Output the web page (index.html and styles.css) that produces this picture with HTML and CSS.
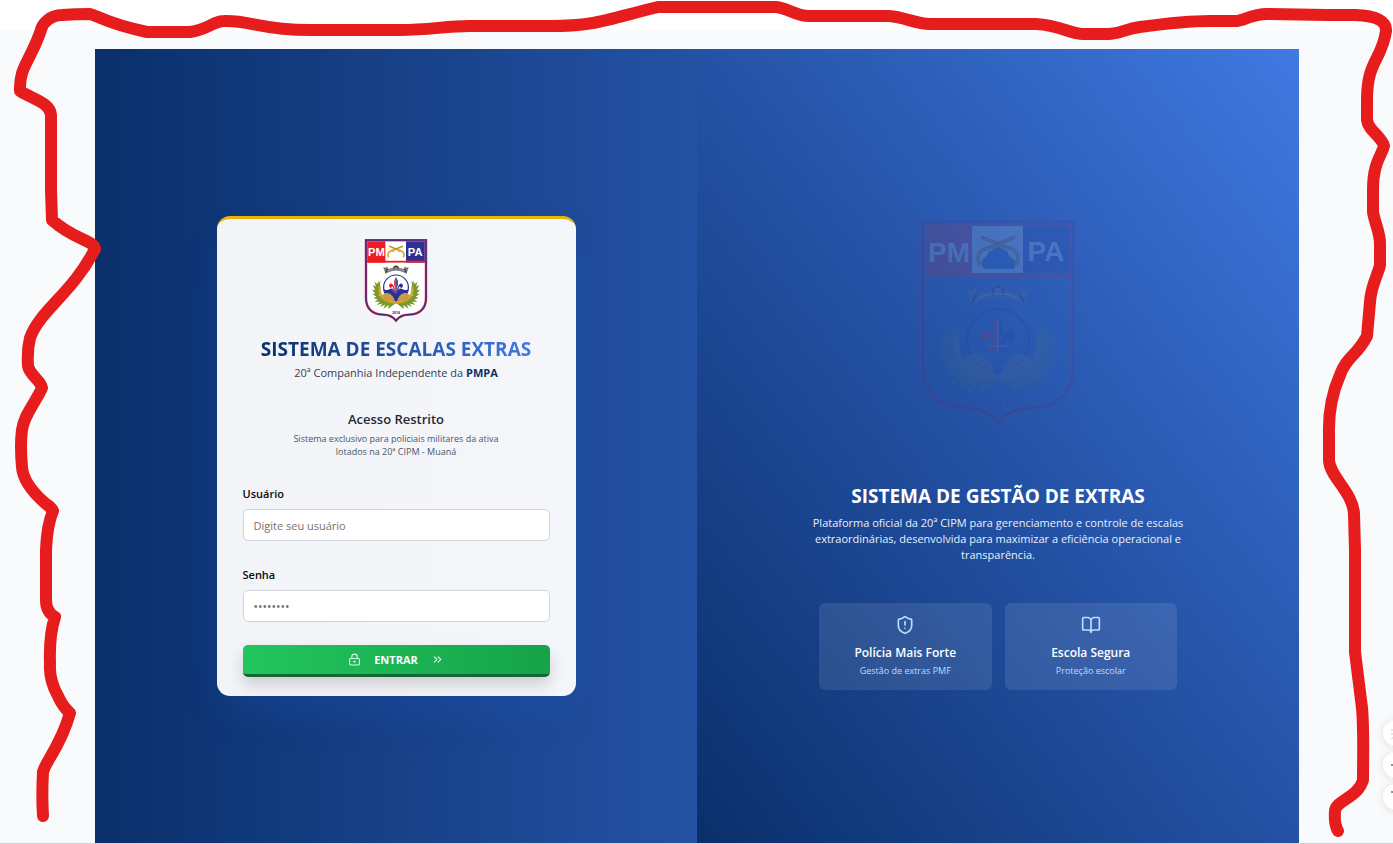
FILE: index.html
```html
<!DOCTYPE html>
<html lang="pt-BR">
<head>
<meta charset="utf-8">
<title>Sistema de Escalas Extras</title>
<meta name="viewport" content="width=device-width, initial-scale=1">
<link rel="stylesheet" href="styles.css">
</head>
<body>
<svg width="0" height="0" class="defs" aria-hidden="true">
  <defs>
    <symbol id="crest" viewBox="0 0 156 210">
      <path d="M1 1H155V148C155 178 136 192 110 192C95 192 86 198 78 208C70 198 61 192 46 192C20 192 1 178 1 148Z" class="crest-field"/>
      <path d="M3 3H153V148C153 176 134 189 110 189C95 189 85 195 78 204C71 195 61 189 46 189C22 189 3 176 3 148Z" class="crest-rim"/>
      <path d="M3 3H153V148C153 176 134 189 110 189C95 189 85 195 78 204C71 195 61 189 46 189C22 189 3 176 3 148Z" class="crest-line"/>
      <rect x="6" y="6" width="46" height="53" fill="#ed1c24"/>
      <rect x="103" y="6" width="47" height="53" fill="#2e3192"/>
      <rect x="6" y="54" width="144" height="5" fill="#ed1c24"/>
      <path fill-rule="evenodd" d="M52 7H103V54H52ZM61 45L64 50H94L96 45C94 38 89 39 88 34L78 27L68 34C67 39 62 38 61 45Z" fill="#fff"/>
      <path class="crest-cloud" d="M61 45L64 50H94L96 45C94 38 89 39 88 34L78 27L68 34C67 39 62 38 61 45Z"/>
      <path d="M60 46C55 36 61 29 71 28L95 18M96 46C101 36 95 29 85 28L61 18" fill="none" stroke="#dba51c" stroke-width="4"/>
      <path d="M67 31Q71 35 74 29M89 31Q85 35 82 29M66 29L95 17M90 29L61 17" stroke="#9b6a16" stroke-width="1" fill="none"/>
      <text x="29" y="43" class="crest-text">PM</text>
      <text x="126" y="42" class="crest-text">PA</text>
      <path d="M46 70L51 72L56 69L58 75L72 71V67H84V71L98 75L100 69L105 72L110 70L104 87L97 83Q78 74 59 83L52 87Z" fill="#777"/>
      <path d="M73 77V70Q78 65 83 70V77M52 84L57 74M104 84L99 74" stroke="#222" stroke-width="2" fill="none"/>
      <path d="M58 79Q78 70 98 79" stroke="#ddd" stroke-width="1" fill="none"/>
      <g class="crest-wreath">
        <path d="M39 104L35 110L33 104L32 113L24 107L28 119L20 115L26 128L18 126L26 136L19 138L29 144L22 148L33 151L24 157L38 157L29 165L44 161L38 170L51 164L46 175L60 165L58 175L78 160L98 175L96 165L110 175L105 164L118 170L112 161L127 165L118 157L132 157L123 151L134 148L127 144L137 138L130 136L138 126L130 128L136 115L128 119L132 107L124 113L123 104L121 110L117 104L120 142L78 162L36 142Z" fill="#79982e"/>
        <path d="M37 118V132Q42 157 78 159Q114 157 119 132V118" fill="none" stroke="#d4a02b" stroke-width="6"/>
      </g>
      <circle cx="78" cy="121" r="31" class="crest-disc"/>
      <path d="M47 125Q53 130 60 126Q69 121 78 128Q87 121 96 126Q104 130 109 125Q107 143 78 157Q49 143 47 125Z" class="crest-sea"/>
      <g class="crest-wreath">
        <path d="M43 140L53 135Q69 134 75 155Q54 157 43 140ZM113 140L103 135Q87 134 81 155Q102 157 113 140Z" fill="#bb953a"/>
        <path d="M47 141L58 136M50 145L65 139M55 149L70 143M61 153L73 148M98 136L109 141M91 139L106 145M86 143L101 149M83 148L95 153" stroke="#ddd0a8" stroke-width="1"/>
      </g>
      <path d="M78 95Q69 109 76 122L74 131L78 139ZM75 124C70 107 60 109 61 118Q63 126 69 119Q75 124 68 132L72 134" fill="#ed1c24"/>
      <path d="M78 95Q87 109 80 122L82 131L78 139ZM81 124C86 107 96 109 95 118Q93 126 87 119Q81 124 88 132L84 134" fill="#2e3192"/>
      <path d="M69 127H87M78 99V136" stroke="#c8ccdc" stroke-width="1"/>
      <text x="78" y="188" class="crest-year">2014</text>
    </symbol>
  </defs>
</svg>

<main class="app">
  <section class="login">
    <form class="card">
      <svg class="crest" role="img" aria-label="Brasão PMPA"><use href="#crest"/></svg>
      <h1 class="card-title">SISTEMA DE ESCALAS EXTRAS</h1>
      <p class="unit">20ª Companhia Independente da <strong>PMPA</strong></p>
      <h2 class="access">Acesso Restrito</h2>
      <p class="notice">Sistema exclusivo para policiais militares da ativa<br>lotados na 20ª CIPM - Muaná</p>
      <div class="field">
        <label for="user">Usuário</label>
        <input id="user" type="text" placeholder="Digite seu usuário">
      </div>
      <div class="field">
        <label for="pass">Senha</label>
        <input id="pass" type="password" placeholder="••••••••">
      </div>
      <button class="enter" type="submit">
        <svg class="icon-lock" viewBox="0 0 24 24"><rect x="3" y="10" width="18" height="12" rx="2"/><path d="M7 10V7a5 5 0 0 1 10 0v3"/><circle cx="12" cy="16" r="1"/></svg>
        <span>ENTRAR</span>
        <svg class="icon-next" viewBox="0 0 24 24"><path d="m6 17 5-5-5-5M13 17l5-5-5-5"/></svg>
      </button>
    </form>
  </section>
  <section class="about">
    <svg class="watermark" aria-hidden="true"><use href="#crest"/></svg>
    <h2 class="about-title">SISTEMA DE GESTÃO DE EXTRAS</h2>
    <p class="about-text">Plataforma oficial da 20ª CIPM para gerenciamento e controle de escalas extraordinárias, desenvolvida para maximizar a eficiência operacional e transparência.</p>
    <div class="features">
      <article class="feature">
        <svg class="icon-feature" viewBox="0 0 24 24"><path d="M20 13c0 5-3.500 7.500-7.660 8.950a1 1 0 0 1-.67-.01C7.500 20.500 4 18 4 13V6a1 1 0 0 1 1-1c2 0 4.500-1.200 6.240-2.720a1.170 1.170 0 0 1 1.520 0C14.510 3.810 17 5 19 5a1 1 0 0 1 1 1zM12 8v4M12 16h.01"/></svg>
        <h3>Polícia Mais Forte</h3>
        <p>Gestão de extras PMF</p>
      </article>
      <article class="feature">
        <svg class="icon-feature" viewBox="0 0 24 24"><path d="M12 7v14M3 18a1 1 0 0 1-1-1V4a1 1 0 0 1 1-1h5a4 4 0 0 1 4 4 4 4 0 0 1 4-4h5a1 1 0 0 1 1 1v13a1 1 0 0 1-1 1h-6a3 3 0 0 0-3 3 3 3 0 0 0-3-3z"/></svg>
        <h3>Escola Segura</h3>
        <p>Proteção escolar</p>
      </article>
    </div>
  </section>
</main>

<aside class="tools">
  <button type="button" aria-label="Menu"><svg viewBox="0 0 26 26"><path d="M8 10h10M8 14h10M8 18h10" stroke="#ccc"/></svg></button>
  <button type="button" aria-label="Adicionar"><svg viewBox="0 0 26 26"><path d="M8 13h10M13 8v10"/></svg></button>
  <button type="button" aria-label="Texto"><svg viewBox="0 0 26 26"><path d="M8 8h10M13 8v10"/></svg></button>
</aside>
<svg class="scribble" viewBox="0 0 1393 844" preserveAspectRatio="none" aria-hidden="true">
  <path d="M43 816C42 800 42 790 43 772C46 760 60 748 70 713C62 706 60 700 58 696Q49 680 50 664Q49 635 55 617Q46 612 46 600V550Q47 525 53 511Q51 507 46 504Q23 484 22 467Q20 445 22 430C24 415 34 405 42 388C41 380 30 376 28 366Q27 350 30 338C40 310 72 294 95 249C94 240 74 240 52 220L51 190V115C50 102 32 99 20 91C19 67 30 62 41 30C42 24 50 15 62 15Q75 14 90 14C98 16 108 24 147 32H190C208 30 213 21 224 21C250 20 260 30 310 30H400C430 30 445 26 470 26H550C595 26 605 20 658 7H776C788 8 795 16 809 16H889C905 17 915 24 930 24H1036C1060 25 1070 34 1083 34H1108C1120 34 1125 29 1140 27Q1185 21 1210 21H1237C1245 20 1252 14 1267 14L1327 15H1355Q1387 16 1386 31C1382 60 1367 60 1367 100V120C1368 130 1382 137 1384 146C1382 155 1373 162 1373 190V212C1375 224 1380 232 1380 244V265C1378 275 1371 285 1370 302L1367 336C1357 356 1346 357 1340 375Q1328 402 1329 435V460C1329 476 1353 492 1354 514L1355 550V652L1362 708C1364 730 1363 760 1363 780C1358 798 1336 800 1335 811Q1334 824 1338 831"/>
</svg>
</body>
</html>
```
FILE: styles.css
```css
* { box-sizing: border-box; }
body {
  margin: 0;
  min-height: 100vh;
  display: flex;
  padding: 49px 94px 0 95px;
  background: linear-gradient(#fff 31px, #f9fafc 31px);
  font-family: "Segoe UI", "Open Sans", "Noto Sans", sans-serif;
  font-size: 11px;
  line-height: 16px;
  border-bottom: 1px solid #d2d4d8;
  overflow: hidden;
}
h1, h2, h3, p { margin: 0; }
.defs { position: absolute; }
.app {
  flex: 1;
  display: grid;
  grid-template-columns: 1fr 1fr;
  background: linear-gradient(90deg, #0a2f6b, #2452a4 50%, #4079e2);
}
.login, .about {
  display: flex;
  flex-direction: column;
  align-items: center;
}
.login { padding-top: 167px; }
.about {
  padding-top: 170px;
  background: linear-gradient(to top right, #0a2f6b, #2452a5 50%, #4079e2);
  color: #fff;
  text-align: center;
}
.card {
  width: 100%;
  max-width: 359px;
  padding: 20px 26px 19px;
  display: flex;
  flex-direction: column;
  background: linear-gradient(90deg, #f3f4f8, #f3f6fa);
  border-top: 3px solid #eab308;
  border-radius: 13px;
  box-shadow: 0 20px 40px -10px rgba(30, 90, 200, .3);
  text-align: center;
}
.crest {
  --field: #fff;
  --disc: #fff;
  --sea: #2e3192;
  --cloud: #fff;
  --wreath: 1;
  width: 64px;
  height: 84px;
  align-self: center;
}
.crest-field { fill: var(--field); }
.crest-rim { fill: none; stroke: #c42a50; stroke-width: 6; }
.crest-line { fill: none; stroke: #3c2c83; stroke-width: 3; }
.crest-cloud { fill: var(--cloud); }
.crest-disc { fill: var(--disc); stroke: #2e3192; stroke-width: 3; }
.crest-sea { fill: var(--sea); }
.crest-wreath { opacity: var(--wreath); }
.crest-text {
  font: 700 28px "Liberation Sans", Arial, sans-serif;
  fill: #fff;
  text-anchor: middle;
}
.crest-year {
  font: 700 9px "Open Sans", sans-serif;
  fill: #2e3192;
  text-anchor: middle;
}
.card-title {
  align-self: center;
  margin-top: 14px;
  font-size: 19px;
  line-height: 24px;
  background: linear-gradient(90deg, #0a2f6b, #2452a5 50%, #4079e2);
  background-clip: text;
  color: transparent;
}
.unit {
  margin-top: 4px;
  color: #374151;
  font-weight: 500;
}
.unit strong { color: #0a2f6b; }
.access {
  margin-top: 28px;
  font-size: 13px;
  line-height: 20px;
  font-weight: 600;
  color: #1f2937;
}
.notice {
  margin-top: 3px;
  font-size: 9px;
  line-height: 13px;
  color: #4b5563;
}
.field {
  display: flex;
  flex-direction: column;
  gap: 7px;
  margin-top: 26px;
  text-align: left;
}
.notice + .field { margin-top: 28px; }
.field label { font-weight: 600; color: #0c0a09; }
.field input {
  width: 100%;
  height: 32px;
  padding: 0 10px;
  border: 1px solid #d1d5db;
  border-radius: 5px;
  background: #fff;
  font: inherit;
  color: #0c0a09;
}
.field input::placeholder { color: #78716c; opacity: 1; }
#pass { font-size: 12px; }
.enter {
  height: 32px;
  margin-top: 23px;
  padding: 0;
  display: flex;
  align-items: center;
  justify-content: center;
  gap: 13px;
  border: 0;
  border-bottom: 3px solid #166534;
  border-radius: 5px;
  background: linear-gradient(90deg, #22c55e, #16a34a) border-box;
  box-shadow: 0 8px 16px rgba(0, 0, 0, .16);
  color: #fff;
  font: inherit;
  font-weight: 700;
}
svg { flex: none; }
.icon-lock, .icon-next, .icon-feature {
  fill: none;
  stroke: currentColor;
  stroke-width: 2;
  stroke-linecap: round;
  stroke-linejoin: round;
}
.icon-lock, .icon-next { width: 13px; height: 13px; stroke: #dcfce7; }
.watermark {
  --field: none;
  --disc: none;
  --sea: none;
  --cloud: none;
  --wreath: .5;
  width: 156px;
  height: 210px;
  opacity: .13;
}
.about-title {
  margin-top: 55px;
  font-size: 19px;
  line-height: 24px;
}
.about-text {
  width: 100%;
  max-width: 380px;
  margin-top: 7px;
  color: #e8f0fe;
}
.features {
  width: 100%;
  max-width: 358px;
  margin-top: 40px;
  display: grid;
  grid-template-columns: 1fr 1fr;
  gap: 13px;
}
.feature {
  display: flex;
  flex-direction: column;
  align-items: center;
  padding: 12px 10px 13px;
  border-radius: 6px;
  background: rgba(255, 255, 255, .1);
}
.icon-feature { width: 20px; height: 20px; color: #bfdbfe; }
.feature h3 {
  margin-top: 9px;
  font-size: 12px;
  line-height: 18px;
  font-weight: 600;
}
.feature p {
  margin-top: 2px;
  font-size: 9px;
  line-height: 13px;
  color: #bfdbfe;
}
.tools {
  position: fixed;
  right: -16px;
  top: 720px;
  display: flex;
  flex-direction: column;
  gap: 6px;
}
.tools button {
  width: 26px;
  height: 26px;
  padding: 0;
  border: 0;
  border-radius: 50%;
  background: #fff;
  box-shadow: 0 1px 8px rgba(0, 0, 0, .12);
}
.tools svg {
  display: block;
  width: 26px;
  height: 26px;
  fill: none;
  stroke: #222;
  stroke-width: 1;
}
.scribble {
  position: fixed;
  inset: 0;
  width: 100%;
  height: 100%;
  fill: none;
  stroke: #e71d1d;
  stroke-width: 12;
  stroke-linecap: round;
  stroke-linejoin: round;
  pointer-events: none;
}
```
